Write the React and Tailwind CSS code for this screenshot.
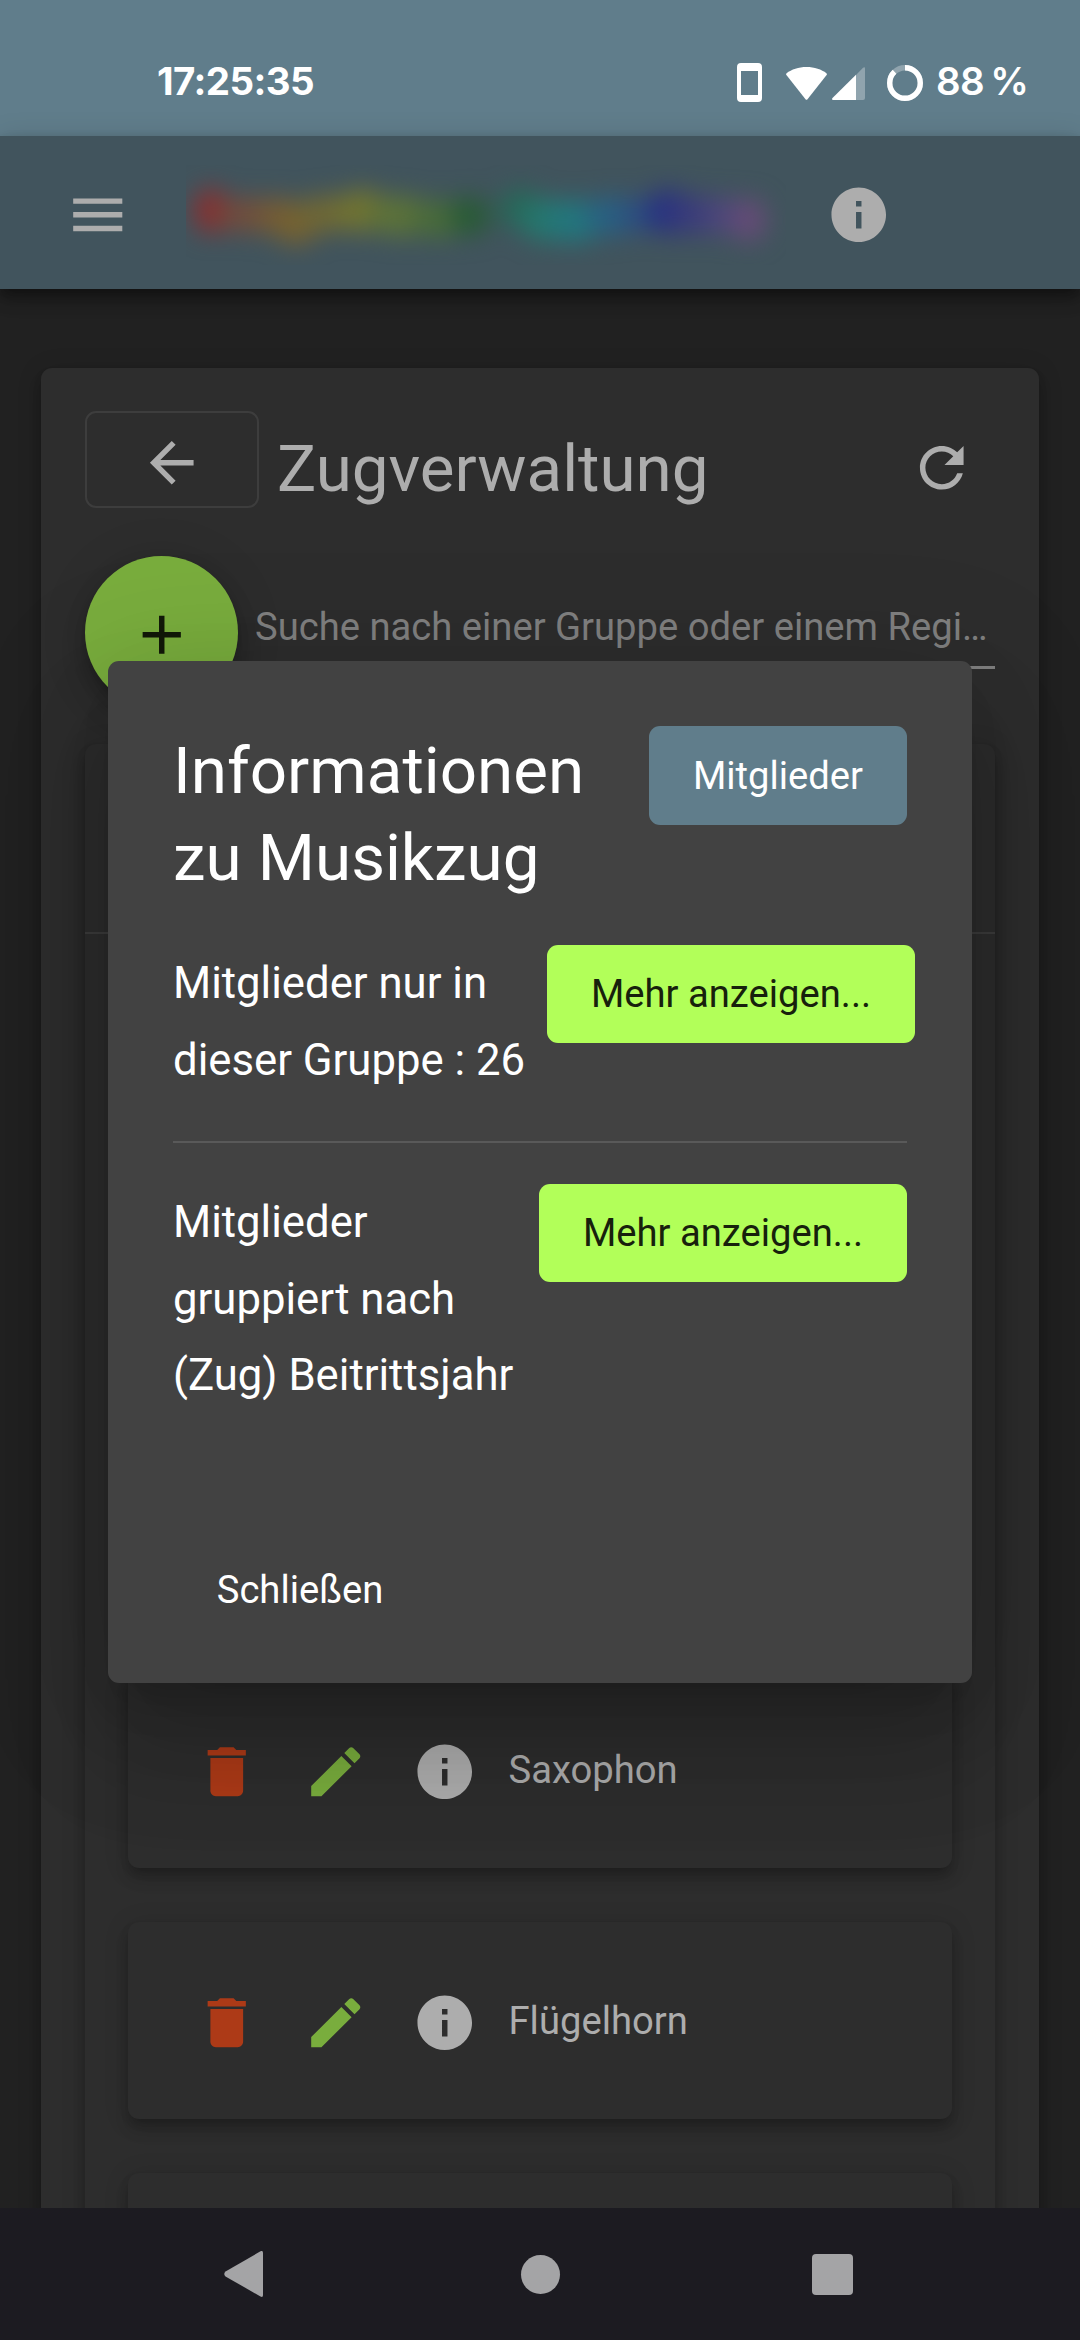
import React from "react";

const ICONS = {
  menu: "M3 18h18v-2H3v2zm0-5h18v-2H3v2zm0-7v2h18V6H3z",
  info: "M12 2C6.48 2 2 6.48 2 12s4.48 10 10 10 10-4.48 10-10S17.52 2 12 2zm1 15h-2v-6h2v6zm0-8h-2V7h2v2z",
  back: "M20 11H7.83l5.59-5.59L12 4l-8 8 8 8 1.41-1.41L7.83 13H20v-2z",
  refresh:
    "M17.65 6.35C16.2 4.9 14.21 4 12 4c-4.42 0-7.99 3.58-7.99 8s3.57 8 7.99 8c3.73 0 6.84-2.55 7.73-6h-2.08c-.82 2.33-3.04 4-5.65 4-3.31 0-6-2.69-6-6s2.69-6 6-6c1.66 0 3.14.69 4.22 1.78L13 11h7V4l-2.35 2.35z",
  add: "M19 13h-6v6h-2v-6H5v-2h6V5h2v6h6v2z",
  trash: "M6 19c0 1.1.9 2 2 2h8c1.1 0 2-.9 2-2V7H6v12zM19 4h-3.5l-1-1h-5l-1 1H5v2h14V4z",
  edit: "M3 17.25V21h3.75L17.81 9.94l-3.75-3.75L3 17.25zM20.71 7.04c.39-.39.39-1.02 0-1.41l-2.34-2.34c-.39-.39-1.02-.39-1.41 0l-1.83 1.83 3.75 3.75 1.83-1.83z",
};

function Icon({ name, className = "" }) {
  return (
    <svg viewBox="0 0 24 24" fill="currentColor" className={`size-[65.5px] shrink-0 ${className}`}>
      <path d={ICONS[name]} />
    </svg>
  );
}

function StatusBar() {
  return (
    <div className="flex h-[136px] shrink-0 items-start bg-[#607d8b] pt-[57px] text-white">
      <span className="ml-[157px] w-[580px] font-['Inter',sans-serif] text-[38.500px] leading-[48px] font-bold tracking-[-0.6px]">
        17:25:35
      </span>
      <svg className="mt-[6px] h-[39px] w-[25px]" viewBox="0 0 25 39">
        <path
          fill="white"
          fillRule="evenodd"
          d="M4 0h17a4 4 0 0 1 4 4v31a4 4 0 0 1-4 4H4a4 4 0 0 1-4-4V4a4 4 0 0 1 4-4zM4 8v24h17V8z"
        />
      </svg>
      <svg className="mt-[10px] ml-[24px] h-[33px] w-[41px]" viewBox="0 0 41 33">
        <path fill="white" d="M20.5 0C12.500 0 5.500 2.500.6 6.200Q-.3 7 .4 8L19.500 32.300q1 1.100 2 0L40.600 8q.7-1-.2-1.800C35.500 2.500 28.500 0 20.500 0z" />
      </svg>
      <svg className="mt-[10px] ml-[5px] h-[33px] w-[33px]" viewBox="0 0 33 33">
        <path fill="white" fillOpacity="0.3" d="M24 8L31 .700q2-1.400 2 .8V31q0 2-2 2h-7z" />
        <path fill="white" d="M24 7.700V33H1.200q-2-.2-.7-1.900z" />
      </svg>
      <svg className="mt-[8px] ml-[22px] h-[36px] w-[36px] -rotate-90" viewBox="0 0 36 36">
        <circle cx="18" cy="18" r="15.300" fill="none" stroke="white" strokeOpacity="0.3" strokeWidth="5.400" />
        <circle cx="18" cy="18" r="15.300" fill="none" stroke="white" strokeWidth="5.400" pathLength="100" strokeDasharray="88 12" />
      </svg>
      <span className="ml-[13px] font-['Inter',sans-serif] text-[38.500px] leading-[48px] font-semibold tracking-[-0.6px] whitespace-nowrap [word-spacing:-3px]">
        88 %
      </span>
    </div>
  );
}

const TITLE_BLOBS = [
  [25, 46, 18, 23, "#882f30"],
  [60, 50, 30, 18, "#714b3d"],
  [90, 51, 26, 19, "#735837"],
  [110, 58, 24, 22, "#776130"],
  [140, 49, 30, 19, "#6f6735"],
  [176, 46, 28, 22, "#717331"],
  [214, 51, 32, 21, "#5c7239"],
  [252, 54, 26, 20, "#496b3a"],
  [284, 51, 20, 20, "#285b35"],
  [334, 44, 22, 21, "#276757"],
  [360, 55, 26, 22, "#25776d"],
  [389, 56, 28, 22, "#22777d"],
  [425, 51, 26, 20, "#286183"],
  [452, 50, 20, 18, "#2c4f80"],
  [482, 47, 22, 23, "#283182"],
  [510, 50, 26, 20, "#393b7b"],
  [538, 51, 22, 19, "#4d467b"],
  [563, 55, 18, 22, "#654b77"],
];

function Toolbar() {
  return (
    <div className="relative z-10 flex h-[153px] shrink-0 items-center bg-[#41545d] text-[#adadad] shadow-[0_5px_11px_-2px_rgba(0,0,0,0.3),0_11px_14px_0_rgba(0,0,0,0.2),0_3px_27px_0_rgba(0,0,0,0.15)]">
      <Icon name="menu" className="mt-[5px] ml-[65px]" />
      <svg className="mt-[5px] ml-[55px] h-[100px] w-[600px] shrink-0" viewBox="0 0 600 100">
        <g className="blur-[12px]">
          {TITLE_BLOBS.map(([cx, cy, rx, ry, fill]) => (
            <ellipse key={cx} cx={cx} cy={cy} rx={rx} ry={ry} fill={fill} />
          ))}
        </g>
      </svg>
      <Icon name="info" className="mt-[5px] ml-[40px]" />
    </div>
  );
}

function GroupRow({ label }) {
  return (
    <div className="flex h-[197px] shrink-0 items-center rounded-[11px] bg-[#2d2d2d] pl-[66px] text-[#adadad] shadow-[0_5px_11px_-3px_rgba(0,0,0,0.2),0_11px_14px_0_rgba(0,0,0,0.14),0_3px_27px_0_rgba(0,0,0,0.12)]">
      <Icon name="trash" className="mt-[5px] text-[#ad3a17]" />
      <Icon name="edit" className="mt-[5px] ml-[43.500px] text-[#79ad3d]" />
      <Icon name="info" className="mt-[5px] ml-[43.500px]" />
      <span className="ml-[31px] text-[38.200px] leading-[48px]">{label}</span>
    </div>
  );
}

function GroupPage() {
  return (
    <div className="flex-1 overflow-hidden px-[41px] pt-[79px]">
      <div className="flex h-[2100px] flex-col rounded-[11px] bg-[#2d2d2d] px-[44px] pt-[43px] shadow-[0_5px_11px_-3px_rgba(0,0,0,0.2),0_11px_14px_0_rgba(0,0,0,0.14),0_3px_27px_0_rgba(0,0,0,0.12)]">
        <div className="flex h-[97px] items-center text-[#adadad]">
          <button className="flex h-[97px] w-[174px] items-center justify-center rounded-[11px] border-2 border-[#3d3d3d]">
            <Icon name="back" className="mt-[6px]" />
          </button>
          <h1 className="mt-[18px] ml-[18px] text-[65.500px] leading-[87px]">Zugverwaltung</h1>
          <Icon name="refresh" className="mt-[17px] mr-[21px] ml-auto" />
        </div>
        <div className="mt-[48px] flex h-[153px]">
          <button className="flex size-[153px] shrink-0 items-center justify-center rounded-full bg-[#79ad3d] text-[#121909] shadow-[0_8px_14px_-3px_rgba(0,0,0,0.2),0_16px_27px_0_rgba(0,0,0,0.14),0_3px_49px_0_rgba(0,0,0,0.12)]">
            <Icon name="add" className="mt-[5px]" />
          </button>
          <div className="ml-[17px] h-[113px] w-[740px] border-b-[3px] border-[#808080] pt-[47px] text-[38.200px] leading-[48px] whitespace-nowrap text-[#808080]">
            Suche nach einer Gruppe oder einem Regi…
          </div>
        </div>
        <div className="mt-[35px] flex flex-1 flex-col rounded-[11px] bg-[#2d2d2d] shadow-[0_5px_11px_-3px_rgba(0,0,0,0.2),0_11px_14px_0_rgba(0,0,0,0.14),0_3px_27px_0_rgba(0,0,0,0.12)]">
          <div className="h-[190px] shrink-0 border-b-2 border-[#3d3d3d]" />
          <div className="mt-[737px] flex flex-col gap-[54px] px-[43px]">
            <GroupRow label="Saxophon" />
            <GroupRow label="Flügelhorn" />
            <GroupRow label="" />
          </div>
        </div>
      </div>
    </div>
  );
}

function MoreButton({ className = "" }) {
  return (
    <button
      className={`flex h-[98px] w-[368px] shrink-0 items-center justify-center rounded-[11px] bg-[#b2ff59] text-[38.200px] whitespace-nowrap text-[#17210c] ${className}`}
    >
      Mehr anzeigen...
    </button>
  );
}

function InfoDialog() {
  return (
    <div className="absolute top-[661px] left-[108px] z-20 flex h-[1022px] w-[864px] flex-col rounded-[11px] bg-[#424242] px-[65px] pt-[65px] text-white shadow-[0_30px_41px_-19px_rgba(0,0,0,0.2),0_65px_104px_8px_rgba(0,0,0,0.14),0_25px_126px_22px_rgba(0,0,0,0.12)]">
      <div className="flex h-[174px] justify-between">
        <h2 className="mt-px text-[65.500px] leading-[87px]">
          Informationen
          <br />
          zu Musikzug
        </h2>
        <button className="flex h-[99px] w-[258px] items-center justify-center rounded-[11px] bg-[#607d8b] pt-[2px] text-[38.200px]">
          Mitglieder
        </button>
      </div>
      <div className="mt-[45px] flex h-[198px] border-b-2 border-[#595959] text-[43.700px] leading-[76.500px]">
        <p className="w-[374px] shrink-0 whitespace-nowrap">
          Mitglieder nur in
          <br />
          dieser Gruppe : 26
        </p>
        <MoreButton />
      </div>
      <div className="mt-[41px] flex justify-between text-[43.700px] leading-[76.500px]">
        <p className="whitespace-nowrap">
          Mitglieder
          <br />
          gruppiert nach
          <br />
          (Zug) Beitrittsjahr
        </p>
        <MoreButton />
      </div>
      <button className="mt-auto mb-[43px] flex h-[98px] w-[254px] items-center justify-center text-[38.200px]">
        Schließen
      </button>
    </div>
  );
}

function NavigationBar() {
  return (
    <div className="relative z-30 flex h-[132px] shrink-0 items-center bg-[#1c1b21] pl-[224px] text-[#a4a4a6]">
      <svg className="h-[46px] w-[39px]" viewBox="0 0 39 46" fill="currentColor">
        <path d="M36.500.300Q39-.8 39 2v42q0 2.800-2.500 1.500L1.500 25.400Q-1 23 1.500 20.600z" />
      </svg>
      <div className="ml-[258px] size-[39px] rounded-full bg-[#a4a4a6]" />
      <div className="ml-[252px] size-[41px] rounded-[4px] bg-[#a4a4a6]" />
    </div>
  );
}

export default function App() {
  return (
    <div className="relative flex h-[2340px] w-[1080px] flex-col overflow-hidden bg-[#212121] font-['Roboto',sans-serif]">
      <StatusBar />
      <Toolbar />
      <GroupPage />
      <InfoDialog />
      <NavigationBar />
    </div>
  );
}
